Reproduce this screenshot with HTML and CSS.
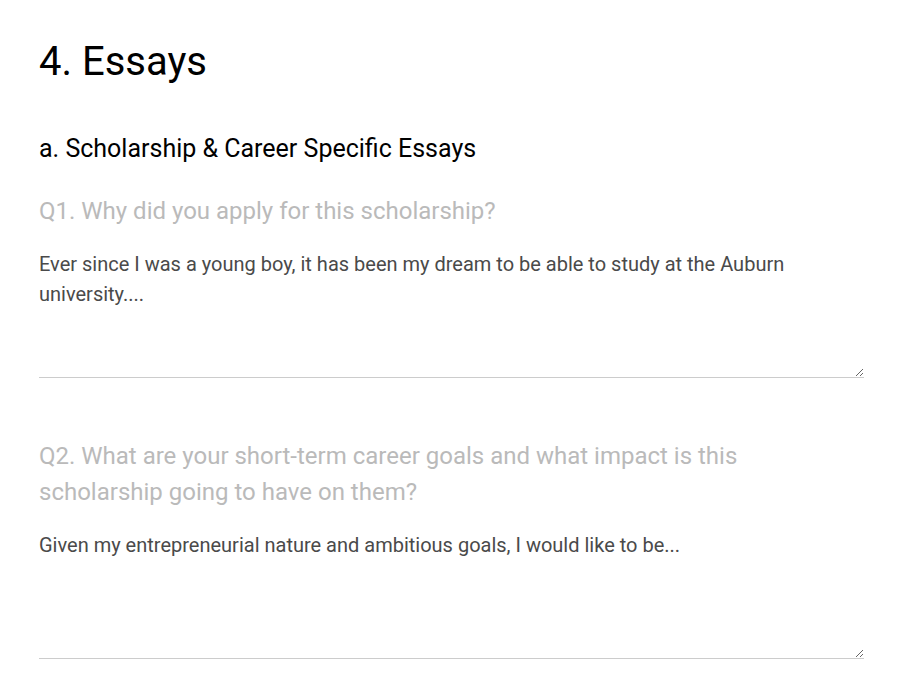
FILE: index.html
```html
<!DOCTYPE html>
<html lang="en">
<head>
<meta charset="utf-8">
<title>4. Essays</title>
<link rel="stylesheet" href="styles.css">
</head>
<body>
<main class="page">
  <h1 class="title">4. Essays</h1>
  <h2 class="subtitle">a. Scholarship &amp; Career Specific Essays</h2>
  <section class="question">
    <label class="question-label" for="q1">Q1. Why did you apply for this scholarship?</label>
    <textarea id="q1" class="answer">Ever since I was a young boy, it has been my dream to be able to study at the Auburn university....</textarea>
  </section>
  <section class="question">
    <label class="question-label" for="q2">Q2. What are your short-term career goals and what impact is this scholarship going to have on them?</label>
    <textarea id="q2" class="answer">Given my entrepreneurial nature and ambitious goals, I would like to be...</textarea>
  </section>
</main>
</body>
</html>
```
FILE: styles.css
```css
html, body {
  margin: 0;
  padding: 0;
  background: #ffffff;
}

body {
  font-family: Roboto, "Liberation Sans", Arial, sans-serif;
}

.page {
  padding: 38px 38px 0 39px;
  display: flex;
  flex-direction: column;
}

.title {
  margin: 0;
  font-size: 40px;
  line-height: 48px;
  font-weight: 400;
  color: #000000;
}

.subtitle {
  margin: 48px 0 0;
  font-size: 25px;
  line-height: 30px;
  font-weight: 400;
  color: #000000;
}

.question {
  display: flex;
  flex-direction: column;
  margin-top: 29px;
}

.question + .question {
  margin-top: 60px;
}

.question-label {
  font-size: 24px;
  line-height: 36px;
  color: #bababa;
}

.answer {
  display: block;
  box-sizing: border-box;
  width: 100%;
  height: 129px;
  margin: 20px 0 0;
  padding: 0;
  border: none;
  border-bottom: 1px solid #cccccc;
  outline: none;
  resize: vertical;
  overflow: auto;
  background: transparent;
  font-family: Roboto, "Liberation Sans", Arial, sans-serif;
  font-size: 20px;
  line-height: 30px;
  color: #4a4a4a;
}
```
